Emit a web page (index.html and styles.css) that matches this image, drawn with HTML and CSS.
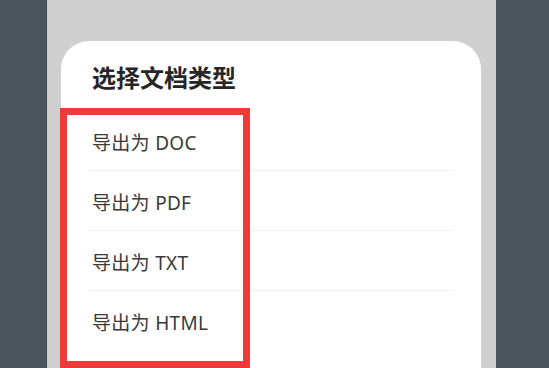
FILE: index.html
```html
<!DOCTYPE html>
<html lang="zh-CN">
<head>
    <meta charset="UTF-8">
    <meta name="viewport" content="width=device-width, initial-scale=1.0">
    <title>选择文档类型</title>
    <link rel="stylesheet" href="styles.css">
</head>
<body>
    <div id="screen">
        <div class="sheet">
            <h2 class="sheet-title">选择文档类型</h2>
            <ul class="export-list">
                <li>导出为 DOC</li>
                <li>导出为 PDF</li>
                <li>导出为 TXT</li>
                <li>导出为 HTML</li>
            </ul>
        </div>
    </div>

    <!-- annotation frame -->
    <div class="highlight-box"></div>
</body>
</html>
```

FILE: styles.css
```css
html, body {
    height: 100%;
}
body {
    margin: 0;
    background-color: #4a555c;
    font-family: "Noto Sans", "Noto Sans CJK SC", sans-serif;
    overflow: hidden;
    position: relative;
}
#screen {
    width: 450px;
    height: 100%;
    margin-left: 46px;
    background-color: #cfcfcf;
    padding: 41px 15px 0 15px;
    box-sizing: border-box;
    border-left: 1px solid #434d53;
}
.sheet {
    background-color: #ffffff;
    border-radius: 28px 28px 0 0;
    padding: 20px 28px 0 28px;
    height: 100%;
    box-sizing: border-box;
    margin-left: -1px;
}
.sheet-title {
    margin: 0 0 16px 3px;
    font-size: 24px;
    line-height: 34px;
    font-weight: 700;
    color: #262626;
}
.export-list {
    list-style-type: none;
    margin: 0;
    padding: 0;
}
.export-list li {
    padding: 18px 0 12px 3px;
    line-height: 29px;
    font-size: 19px;
    letter-spacing: 0.3px;
    color: #3a3a3a;
    border-bottom: 1px solid #f1f1f1;
}
.export-list li:last-child {
    border-bottom: none;
}
.highlight-box {
    position: absolute;
    left: 60px;
    top: 108px;
    width: 190px;
    height: 260px;
    border: 7px solid #ee3a3a;
    box-sizing: border-box;
}
```
